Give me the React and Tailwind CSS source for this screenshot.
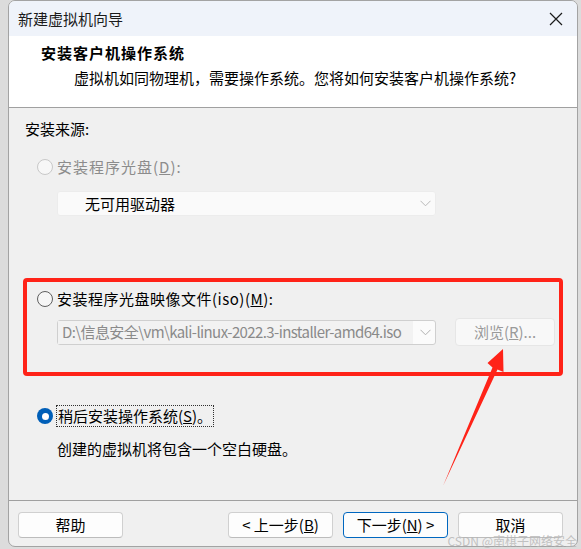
import React from 'react';

const font = { fontFamily: '"Noto Sans CJK SC", "Microsoft YaHei", sans-serif' };

function Radio({ checked, disabled }) {
  if (checked) {
    return (
      <span className="w-[16px] h-[16px] rounded-full bg-[#005fb8] flex items-center justify-center shrink-0">
        <span className="w-[7px] h-[7px] rounded-full bg-white" />
      </span>
    );
  }
  return (
    <span
      className={`w-[16px] h-[16px] rounded-full border shrink-0 ${
        disabled ? 'border-[#c8c8c8] bg-[#f7f7f7]' : 'border-[#5f5f5f] bg-[#f6f6f6]'
      }`}
    />
  );
}

function Chevron({ color }) {
  return (
    <svg width="11" height="7" viewBox="0 0 11 7" className="shrink-0">
      <path d="M0.5 0.8 L5.5 5.8 L10.5 0.8" fill="none" stroke={color} strokeWidth="1" />
    </svg>
  );
}

function Button({ children, primary }) {
  return (
    <div
      className={`w-[105px] h-[26px] rounded-[4px] bg-[#fdfdfd] flex items-center justify-center text-[15px] text-black ${
        primary ? 'border border-[#0067c0]' : 'border border-[#d0d0d0] border-b-[#bcbcbc]'
      }`}
    >
      {children}
    </div>
  );
}

export default function App() {
  return (
    <div className="relative w-[581px] h-[549px] bg-[#dcdcdc] pl-[8px] overflow-hidden" style={font}>
      <div className="w-[570px] h-[547px] rounded-[7px] border border-[#a3a3a3] bg-[#f0f0f0] overflow-hidden flex flex-col">
        {/* title bar */}
        <div className="h-[35px] bg-[#eff3fa] flex items-center justify-between pl-[9px] pr-[14px] shrink-0">
          <span className="text-[15px] text-[#1b1b1b] leading-[20px]">新建虚拟机向导</span>
          <svg width="14" height="14" viewBox="0 0 14 14">
            <path d="M1 1 L13 13 M13 1 L1 13" stroke="#1b1b1b" strokeWidth="1.2" />
          </svg>
        </div>

        {/* header */}
        <div className="h-[72px] bg-white shrink-0 pt-[7px] border-b border-[#a0a0a0]">
          <div className="pl-[32px] text-[15px] font-bold text-black leading-[20px] tracking-[1px]">安装客户机操作系统</div>
          <div className="pl-[65px] mt-[5px] text-[15px] text-black leading-[20px]">
            虚拟机如同物理机，需要操作系统。您将如何安装客户机操作系统?
          </div>
        </div>

        {/* body */}
        <div className="h-[393px] shrink-0 border-b border-[#a0a0a0] pl-[16px] flex flex-col">
          <div className="mt-[11px] text-[15px] leading-[20px] text-black">安装来源:</div>

          <div className="mt-[18px] pl-[12px] flex items-center gap-[4px] h-[20px]">
            <Radio disabled />
            <span className="text-[15px] leading-[20px] text-[#8c8c8c] tracking-[1px]">
              安装程序光盘(<span className="underline">D</span>):
            </span>
          </div>

          <div className="mt-[14px] ml-[32px] w-[379px] h-[25px] rounded-[3px] bg-[#fafafa] border border-[#ececec] flex items-center pl-[27px] pr-[4px]">
            <span className="flex-1 text-[15px] text-black leading-[20px]">无可用驱动器</span>
            <Chevron color="#b8b8b8" />
          </div>

          {/* highlighted section */}
          <div className="mt-[62px] w-[540px] h-[98px] border-[4px] border-[#ff2318] rounded-[4px] pl-[10px] pt-[7px] ml-[-2px]">
            <div className="flex items-center gap-[4px] h-[20px]">
              <Radio />
              <span className="text-[15px] leading-[20px] text-black tracking-[0.5px]">
                安装程序光盘映像文件(iso)(<span className="underline">M</span>):
              </span>
            </div>
            <div className="mt-[9px] flex items-center gap-[19px] pl-[20px]">
              <div className="w-[379px] h-[25px] rounded-[3px] bg-[#fbfbfb] border border-[#cfcfcf] flex items-center pr-[4px]">
                <div className="w-[355px] h-[23px] bg-[#f2f2f2] flex items-center pl-[4px] overflow-hidden">
                  <span className="text-[15px] leading-[20px] text-[#8a8a8a] whitespace-nowrap tracking-[-0.6px]">
                    D:\信息安全\vm\kali-linux-2022.3-installer-amd64.iso
                  </span>
                </div>
                <div className="flex-1 flex justify-end">
                  <Chevron color="#b0b0b0" />
                </div>
              </div>
              <div className="w-[100px] h-[28px] rounded-[4px] bg-[#f8f8f8] border border-[#e6e6e6] flex items-center justify-center text-[15px] text-[#9a9a9a]">
                浏览(<span className="underline">R</span>)...
              </div>
            </div>
          </div>

          <div className="mt-[29px] pl-[12px] flex items-center gap-[3px] h-[22px]">
            <Radio checked />
            <span className="text-[15px] leading-[20px] text-black border border-dotted border-[#303030] px-px">
              稍后安装操作系统(<span className="underline">S</span>)。
            </span>
          </div>

          <div className="mt-[12px] pl-[32px] text-[15px] leading-[20px] text-black">创建的虚拟机将包含一个空白硬盘。</div>
        </div>

        {/* footer */}
        <div className="flex items-start pt-[11px] pl-[9px]">
          <Button>帮助</Button>
          <div className="ml-[105px] flex gap-[10px]">
            <Button>&lt; 上一步(<span className="underline">B</span>)</Button>
            <Button primary>
              下一步(<span className="underline">N</span>) &gt;
            </Button>
            <Button>取消</Button>
          </div>
        </div>
      </div>

      {/* annotation arrow */}
      <svg className="absolute left-0 top-0 pointer-events-none" width="581" height="549" viewBox="0 0 581 549">
        <polygon
          points="443,486 492.5,367.5 487.5,363 503,349 503.5,372 497.5,369.5"
          fill="#ff2318"
        />
      </svg>

      {/* watermark */}
      <div className="absolute right-[4px] bottom-[1px] text-[12px] leading-[14px] text-[#b4b4b4]/80 whitespace-nowrap">
        CSDN @南棋子网络安全
      </div>
    </div>
  );
}
